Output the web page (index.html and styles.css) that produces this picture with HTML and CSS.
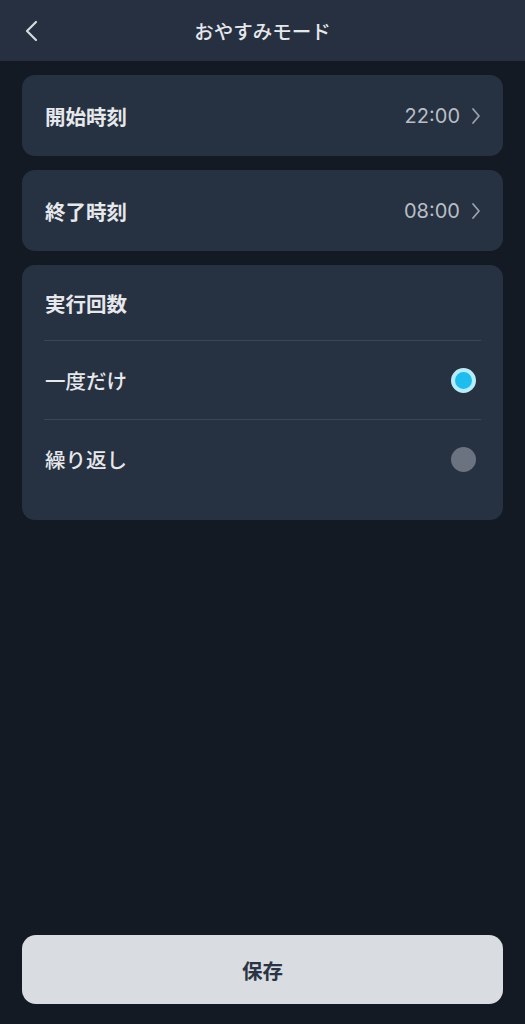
FILE: index.html
```html
<!DOCTYPE html>
<html lang="ja">
<head>
    <meta charset="UTF-8" />
    <title>おやすみモード</title>
    <link rel="stylesheet" href="styles.css">
</head>
<body>
    <div class="app">
        <header class="topbar">
            <button class="back" aria-label="戻る">
                <svg width="16" height="22" viewBox="0 0 16 22"><path d="M12 2 L3 11 L12 20" fill="none" stroke="#d6dae0" stroke-width="2.2" stroke-linecap="round" stroke-linejoin="round"/></svg>
            </button>
            <h1>おやすみモード</h1>
        </header>

        <main class="content">
            <div class="card row">
                <span class="label">開始時刻</span>
                <span class="value">22:00
                    <svg class="chev" width="10" height="18" viewBox="0 0 10 18"><path d="M2 2 L8 9 L2 16" fill="none" stroke="#9aa1ab" stroke-width="1.8" stroke-linecap="round" stroke-linejoin="round"/></svg>
                </span>
            </div>

            <div class="card row">
                <span class="label">終了時刻</span>
                <span class="value">08:00
                    <svg class="chev" width="10" height="18" viewBox="0 0 10 18"><path d="M2 2 L8 9 L2 16" fill="none" stroke="#9aa1ab" stroke-width="1.8" stroke-linecap="round" stroke-linejoin="round"/></svg>
                </span>
            </div>

            <div class="card group">
                <div class="group-title">実行回数</div>
                <div class="option">
                    <span class="option-text">一度だけ</span>
                    <span class="radio on"></span>
                </div>
                <div class="option">
                    <span class="option-text">繰り返し</span>
                    <span class="radio"></span>
                </div>
            </div>
        </main>

        <div class="footer">
            <button class="save">保存</button>
        </div>
    </div>
</body>
</html>
```

FILE: styles.css
```css
html, body {
    margin: 0;
    padding: 0;
    height: 100%;
    background: #131a24;
    font-family: "Noto Sans CJK JP", "Noto Sans", sans-serif;
    color: #e8eaed;
}

.app {
    height: 1024px;
    display: flex;
    flex-direction: column;
}

.topbar {
    height: 61px;
    background: #263040;
    display: flex;
    align-items: center;
    justify-content: center;
    position: relative;
}

.topbar h1 {
    margin: 0;
    font-size: 19.5px;
    font-weight: 500;
    color: #e4e7eb;
}

.back {
    position: absolute;
    left: 22px;
    top: 20px;
    background: none;
    border: none;
    padding: 0;
    width: 20px;
    height: 22px;
    cursor: pointer;
}

.content {
    flex: 1;
    padding: 14px 22px 0;
    display: flex;
    flex-direction: column;
    gap: 14px;
}

.card {
    background: #263141;
    border-radius: 13px;
}

.row {
    height: 81px;
    padding: 0 22px 0 23px;
    display: flex;
    align-items: center;
    justify-content: space-between;
    box-sizing: border-box;
}

.label {
    font-size: 20.5px;
    font-weight: 700;
    color: #e6e8ec;
}

.value {
    display: flex;
    align-items: center;
    gap: 11px;
    font-size: 20px;
    color: #b9bec6;
    font-family: "Inter", "Noto Sans", sans-serif;
}

.group {
    height: 255px;
    padding: 0 22px;
    box-sizing: border-box;
}

.group-title {
    height: 75px;
    display: flex;
    align-items: center;
    padding-left: 1px;
    font-size: 20.5px;
    font-weight: 700;
    color: #e6e8ec;
    border-bottom: 1.5px solid #3a4556;
}

.option {
    height: 78px;
    display: flex;
    align-items: center;
    justify-content: space-between;
    padding-left: 1px;
}

.option + .option {
    border-top: 1.5px solid #3a4556;
}

.option-text {
    font-size: 20.5px;
    font-weight: 500;
    color: #e6e8ec;
}

.radio {
    width: 25px;
    height: 25px;
    border-radius: 50%;
    background: #6b7280;
    margin-right: 5px;
    box-sizing: border-box;
}

.radio.on {
    background: #1fbcef;
    border: 4px solid #b7ecfb;
}

.footer {
    padding: 0 22px 20px;
}

.save {
    width: 100%;
    height: 69px;
    background: #d9dde1;
    border: none;
    border-radius: 14px;
    font-family: "Noto Sans CJK JP", sans-serif;
    font-size: 20.5px;
    font-weight: 700;
    color: #2b3444;
    cursor: pointer;
}
```
